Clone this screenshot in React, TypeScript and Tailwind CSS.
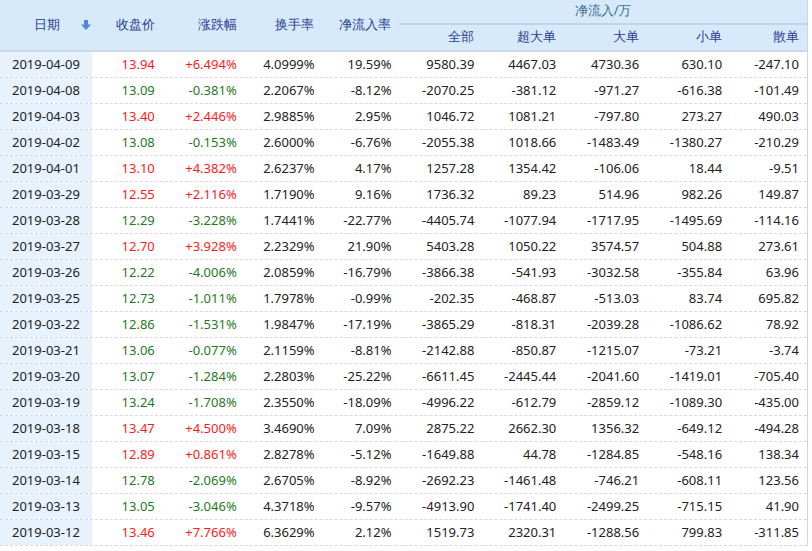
const rows: string[][] = [
  ["2019-04-09", "13.94", "+6.494%", "4.0999%", "19.59%", "9580.39", "4467.03", "4730.36", "630.10", "-247.10"],
  ["2019-04-08", "13.09", "-0.381%", "2.2067%", "-8.12%", "-2070.25", "-381.12", "-971.27", "-616.38", "-101.49"],
  ["2019-04-03", "13.40", "+2.446%", "2.9885%", "2.95%", "1046.72", "1081.21", "-797.80", "273.27", "490.03"],
  ["2019-04-02", "13.08", "-0.153%", "2.6000%", "-6.76%", "-2055.38", "1018.66", "-1483.49", "-1380.27", "-210.29"],
  ["2019-04-01", "13.10", "+4.382%", "2.6237%", "4.17%", "1257.28", "1354.42", "-106.06", "18.44", "-9.51"],
  ["2019-03-29", "12.55", "+2.116%", "1.7190%", "9.16%", "1736.32", "89.23", "514.96", "982.26", "149.87"],
  ["2019-03-28", "12.29", "-3.228%", "1.7441%", "-22.77%", "-4405.74", "-1077.94", "-1717.95", "-1495.69", "-114.16"],
  ["2019-03-27", "12.70", "+3.928%", "2.2329%", "21.90%", "5403.28", "1050.22", "3574.57", "504.88", "273.61"],
  ["2019-03-26", "12.22", "-4.006%", "2.0859%", "-16.79%", "-3866.38", "-541.93", "-3032.58", "-355.84", "63.96"],
  ["2019-03-25", "12.73", "-1.011%", "1.7978%", "-0.99%", "-202.35", "-468.87", "-513.03", "83.74", "695.82"],
  ["2019-03-22", "12.86", "-1.531%", "1.9847%", "-17.19%", "-3865.29", "-818.31", "-2039.28", "-1086.62", "78.92"],
  ["2019-03-21", "13.06", "-0.077%", "2.1159%", "-8.81%", "-2142.88", "-850.87", "-1215.07", "-73.21", "-3.74"],
  ["2019-03-20", "13.07", "-1.284%", "2.2803%", "-25.22%", "-6611.45", "-2445.44", "-2041.60", "-1419.01", "-705.40"],
  ["2019-03-19", "13.24", "-1.708%", "2.3550%", "-18.09%", "-4996.22", "-612.79", "-2859.12", "-1089.30", "-435.00"],
  ["2019-03-18", "13.47", "+4.500%", "3.4690%", "7.09%", "2875.22", "2662.30", "1356.32", "-649.12", "-494.28"],
  ["2019-03-15", "12.89", "+0.861%", "2.8278%", "-5.12%", "-1649.88", "44.78", "-1284.85", "-548.16", "138.34"],
  ["2019-03-14", "12.78", "-2.069%", "2.6705%", "-8.92%", "-2692.23", "-1461.48", "-746.21", "-608.11", "123.56"],
  ["2019-03-13", "13.05", "-3.046%", "4.3718%", "-9.57%", "-4913.90", "-1741.40", "-2499.25", "-715.15", "41.90"],
  ["2019-03-12", "13.46", "+7.766%", "6.3629%", "2.12%", "1519.73", "2320.31", "-1288.56", "799.83", "-311.85"],
];

const widths = ["w-[92px]", "w-[71px]", "w-[82px]", "w-[78px]", "w-[77px]", "w-[83px]", "w-[82px]", "w-[83px]", "w-[83px]", "w-[77px]"];

export default function App() {
  return (
    <div className="w-[812px] h-[551px] overflow-hidden bg-white font-['Liberation_Sans','Noto_Sans_CJK_SC',sans-serif] text-[13px]">
      <div className="w-[808px] border-r border-[#ccd6e3]">
        <div className="flex h-[52px] bg-[#d6eafb] border-b-2 border-[#cdd8e8] text-[#2b3d8f] font-['Noto_Sans_CJK_SC',sans-serif] text-[12.5px]">
          <div className="w-[92px] shrink-0 flex items-center pl-[34px] gap-[21px] whitespace-nowrap">
            <span>日期</span>
            <svg width="10" height="10" viewBox="0 0 10 10" className="shrink-0">
              <rect x="3" y="0" width="4" height="5" fill="#4a8ad8" />
              <path d="M0 4.5 H10 L5 10 Z" fill="#4a8ad8" />
            </svg>
          </div>
          <div className="w-[71px] flex items-center justify-end pr-[8px]">收盘价</div>
          <div className="w-[82px] flex items-center justify-end pr-[8px]">涨跌幅</div>
          <div className="w-[78px] flex items-center justify-end pr-[8px]">换手率</div>
          <div className="w-[77px] flex items-center justify-end pr-[8px]">净流入率</div>
          <div className="flex-1 flex flex-col">
            <div className="h-[25px] flex items-center justify-center border-b-2 border-[#c6d3e6] text-[#3d6b8f]">净流入/万</div>
            <div className="flex-1 flex">
              {["全部", "超大单", "大单", "小单", "散单"].map((h, i) => (
                <div key={h} className={`${widths[i + 5]} flex items-center justify-end pr-[8px]`}>{h}</div>
              ))}
            </div>
          </div>
        </div>
        {rows.map((r) => {
          const up = r[2].startsWith("+");
          const color = up ? "text-[#ff1a1a]" : "text-[#1f7a1f]";
          return (
            <div key={r[0]} className="flex h-[26px] border-b border-dashed border-[#d9d9d9] text-[#222]">
              {r.map((c, i) => (
                <div
                  key={i}
                  className={`${widths[i]} flex items-center ${i === 0 ? "justify-center bg-[#e7f2fd]" : "justify-end pr-[8px]"} ${i === 1 || i === 2 ? color : ""}`}
                >
                  {c}
                </div>
              ))}
            </div>
          );
        })}
      </div>
    </div>
  );
}
